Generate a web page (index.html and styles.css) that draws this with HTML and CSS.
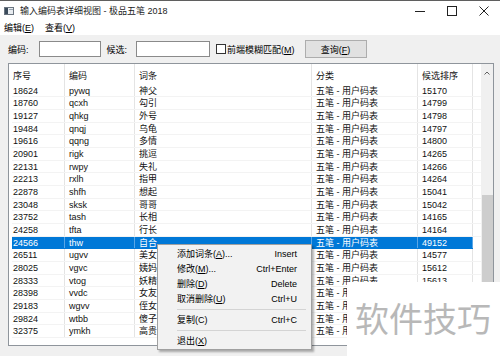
FILE: index.html
```html
<!DOCTYPE html>
<html lang="zh-CN">

<head>
    <meta charset="UTF-8" />
    <title>输入编码表详细视图 - 极品五笔 2018</title>
    <link rel="stylesheet" href="styles.css">
</head>

<body>
    <div class="window">
        <div class="titlebar">
            <svg class="appicon" width="10" height="8" viewBox="0 0 10 8">
                <rect x="0.5" y="0.5" width="9" height="7" fill="#e8ecf0" stroke="#6b7580" />
                <rect x="1" y="1" width="3" height="6" fill="#3a4a5a" />
                <rect x="5" y="2" width="4" height="1" fill="#9aa6b2" />
            </svg>
            <span class="title">输入编码表详细视图 - 极品五笔 2018</span>
            <div class="controls">
                <div class="ctl">
                    <svg width="10" height="10" viewBox="0 0 10 10"><path d="M0 5.5h10" stroke="#222" stroke-width="1" /></svg>
                </div>
                <div class="ctl">
                    <svg width="10" height="10" viewBox="0 0 10 10"><rect x="0.5" y="0.5" width="9" height="9" fill="none" stroke="#222" /></svg>
                </div>
                <div class="ctl">
                    <svg width="10" height="10" viewBox="0 0 10 10"><path d="M0.5 0.5l9 9M9.5 0.5l-9 9" stroke="#222" stroke-width="1" /></svg>
                </div>
            </div>
        </div>

        <div class="menubar">
            <span>编辑(<u>E</u>)</span>
            <span>查看(<u>V</u>)</span>
        </div>

        <div class="toolbar">
            <span class="lbl">编码:</span>
            <input class="field field-code" type="text">
            <span class="lbl lbl-cand">候选:</span>
            <input class="field field-cand" type="text">
            <span class="check"></span>
            <span class="lbl lbl-check">前端模糊匹配(<u>M</u>)</span>
            <button class="query">查询(<u>F</u>)</button>
        </div>

        <div class="list">
            <div class="grid">
                <div class="row head">
                    <div class="c c1">序号</div><div class="c c2">编码</div><div class="c c3">词条</div><div class="c c4">分类</div><div class="c c5">候选排序</div>
                </div>
                <div class="row"><div class="c c1">18624</div><div class="c c2">pywq</div><div class="c c3">神父</div><div class="c c4">五笔 - 用户码表</div><div class="c c5">15170</div></div>
                <div class="row"><div class="c c1">18760</div><div class="c c2">qcxh</div><div class="c c3">勾引</div><div class="c c4">五笔 - 用户码表</div><div class="c c5">14799</div></div>
                <div class="row"><div class="c c1">19127</div><div class="c c2">qhkg</div><div class="c c3">外号</div><div class="c c4">五笔 - 用户码表</div><div class="c c5">14798</div></div>
                <div class="row"><div class="c c1">19484</div><div class="c c2">qnqj</div><div class="c c3">乌龟</div><div class="c c4">五笔 - 用户码表</div><div class="c c5">14797</div></div>
                <div class="row"><div class="c c1">19616</div><div class="c c2">qqng</div><div class="c c3">多情</div><div class="c c4">五笔 - 用户码表</div><div class="c c5">14800</div></div>
                <div class="row"><div class="c c1">20901</div><div class="c c2">rigk</div><div class="c c3">挑逗</div><div class="c c4">五笔 - 用户码表</div><div class="c c5">14265</div></div>
                <div class="row"><div class="c c1">22131</div><div class="c c2">rwpy</div><div class="c c3">失礼</div><div class="c c4">五笔 - 用户码表</div><div class="c c5">14266</div></div>
                <div class="row"><div class="c c1">22213</div><div class="c c2">rxlh</div><div class="c c3">指甲</div><div class="c c4">五笔 - 用户码表</div><div class="c c5">14264</div></div>
                <div class="row"><div class="c c1">22878</div><div class="c c2">shfh</div><div class="c c3">想起</div><div class="c c4">五笔 - 用户码表</div><div class="c c5">15041</div></div>
                <div class="row"><div class="c c1">23048</div><div class="c c2">sksk</div><div class="c c3">哥哥</div><div class="c c4">五笔 - 用户码表</div><div class="c c5">15042</div></div>
                <div class="row"><div class="c c1">23752</div><div class="c c2">tash</div><div class="c c3">长相</div><div class="c c4">五笔 - 用户码表</div><div class="c c5">14165</div></div>
                <div class="row"><div class="c c1">24258</div><div class="c c2">tfta</div><div class="c c3">行长</div><div class="c c4">五笔 - 用户码表</div><div class="c c5">14164</div></div>
                <div class="row selected"><div class="c c1">24566</div><div class="c c2">thw</div><div class="c c3">自合</div><div class="c c4">五笔 - 用户码表</div><div class="c c5">49152</div></div>
                <div class="row"><div class="c c1">26511</div><div class="c c2">ugvv</div><div class="c c3">美女</div><div class="c c4">五笔 - 用户码表</div><div class="c c5">14577</div></div>
                <div class="row"><div class="c c1">28025</div><div class="c c2">vgvc</div><div class="c c3">姨妈</div><div class="c c4">五笔 - 用户码表</div><div class="c c5">15612</div></div>
                <div class="row"><div class="c c1">28333</div><div class="c c2">vtog</div><div class="c c3">妖精</div><div class="c c4">五笔 - 用户码表</div><div class="c c5">15613</div></div>
                <div class="row"><div class="c c1">28398</div><div class="c c2">vvdc</div><div class="c c3">女友</div><div class="c c4">五笔 - 用户码表</div><div class="c c5"></div></div>
                <div class="row"><div class="c c1">29183</div><div class="c c2">wgvv</div><div class="c c3">侄女</div><div class="c c4">五笔 - 用户码表</div><div class="c c5"></div></div>
                <div class="row"><div class="c c1">29824</div><div class="c c2">wtbb</div><div class="c c3">傻子</div><div class="c c4">五笔 - 用户码表</div><div class="c c5"></div></div>
                <div class="row"><div class="c c1">32375</div><div class="c c2">ymkh</div><div class="c c3">高贵</div><div class="c c4">五笔 - 用户码表</div><div class="c c5"></div></div>
            </div>
            <div class="scrollbar">
                <svg class="up" width="6" height="4" viewBox="0 0 6 4"><path d="M0.5 3.5L3 1l2.5 2.5" fill="none" stroke="#606060" stroke-width="1" /></svg>
                <div class="thumb"></div>
            </div>
        </div>

        <div class="ctxmenu">
            <div class="item"><span>添加词条(<u>A</u>)...</span><span>Insert</span></div>
            <div class="item"><span>修改(<u>M</u>)...</span><span>Ctrl+Enter</span></div>
            <div class="item"><span>删除(<u>D</u>)</span><span>Delete</span></div>
            <div class="item"><span>取消删除(<u>U</u>)</span><span>Ctrl+U</span></div>
            <div class="sep"></div>
            <div class="item"><span>复制(C)</span><span>Ctrl+C</span></div>
            <div class="sep"></div>
            <div class="item"><span>退出(<u>X</u>)</span><span></span></div>
        </div>

        <div class="watermark">软件技巧</div>
    </div>
</body>

</html>
```

FILE: styles.css
```css
body {
    margin: 0;
    background-color: #f0f0f0;
    font-family: "Liberation Sans", "Noto Sans CJK SC", sans-serif;
    font-size: 9px;
    color: #111;
    overflow: hidden;
}

.window {
    position: relative;
    height: 356px;
    box-sizing: border-box;
    border-top: 1px solid #5f5f5f;
}

/* title bar */
.titlebar {
    height: 19px;
    background-color: #fff;
    display: flex;
    align-items: center;
    padding-left: 4px;
}

.appicon {
    display: block;
}

.title {
    margin-left: 6px;
    color: #222;
}

.controls {
    margin-left: auto;
    display: flex;
    height: 19px;
}

.ctl {
    width: 32px;
    display: flex;
    align-items: center;
    justify-content: center;
}

/* menu bar */
.menubar {
    height: 15px;
    background-color: #fff;
    display: flex;
    align-items: center;
    gap: 11px;
    padding-left: 4px;
    color: #000;
}

u {
    text-underline-offset: 1px;
}

/* search row */
.toolbar {
    height: 28px;
    display: flex;
    align-items: center;
    padding-left: 8px;
    color: #000;
}

.field {
    box-sizing: border-box;
    height: 16px;
    margin: 0;
    padding: 0;
    border: 1px solid #8a8a8a;
    background-color: #fff;
}

.field-code {
    width: 62px;
    margin-left: 10px;
}

.lbl-cand {
    margin-left: 6px;
}

.field-cand {
    width: 74px;
    margin-left: 9px;
}

.check {
    box-sizing: border-box;
    width: 10px;
    height: 10px;
    margin-left: 6px;
    border: 1px solid #333;
    background-color: #fff;
}

.lbl-check {
    margin-left: 1px;
}

.query {
    box-sizing: border-box;
    width: 62px;
    height: 18px;
    margin-left: 10px;
    padding: 0;
    font: inherit;
    color: #000;
    background-color: #e1e1e1;
    border: 1px solid #adadad;
}

/* list view */
.list {
    box-sizing: border-box;
    height: 283px;
    margin: 0 6px 0 8px;
    border: 1px solid #8f959c;
    background-color: #fff;
    display: flex;
}

.grid {
    flex: 1;
    padding-left: 3px;
}

.row {
    display: flex;
    box-sizing: border-box;
    height: 12.68px;
    line-height: 12px;
    border-bottom: 1px solid #f3f3f3;
    white-space: nowrap;
}

.row.head {
    height: 20.6px;
    padding-top: 6px;
    border-bottom: none;
}

.c {
    box-sizing: border-box;
    border-right: 1px solid #e4e4e4;
    padding-left: 4px;
    overflow: hidden;
}

.c1 {
    width: 53px;
    padding-left: 1px;
}

.c2 {
    width: 70px;
}

.c3 {
    width: 177px;
}

.c4 {
    width: 106px;
}

.c5 {
    width: 55px;
}

.row.head .c {
    margin-top: -6px;
    padding-top: 6px;
}

.row.selected {
    background-color: #0078d7;
    color: #fff;
    width: 461px;
    border-bottom-color: #0078d7;
}

.row.selected .c {
    border-right-color: #5aa6e6;
}

.scrollbar {
    width: 12px;
    background-color: #f0f0f0;
    display: flex;
    flex-direction: column;
    align-items: center;
}

.up {
    display: block;
    margin-top: 7px;
}

.thumb {
    width: 11px;
    height: 105px;
    margin-top: 120px;
    background-color: #cdcdcd;
}

/* context menu */
.ctxmenu {
    position: absolute;
    left: 157px;
    top: 243px;
    width: 155px;
    box-sizing: border-box;
    padding: 1px 0;
    background-color: #f2f2f2;
    border: 1px solid #a0a0a0;
    box-shadow: 2px 2px 2px rgba(0, 0, 0, 0.3);
    color: #000;
}

.item {
    height: 15px;
    display: flex;
    align-items: center;
    justify-content: space-between;
    padding: 0 14px 0 19px;
}

.sep {
    height: 1px;
    margin: 2.5px 5px 2.5px 19px;
    background-color: #d4d4d4;
}

/* watermark */
.watermark {
    position: absolute;
    left: 347px;
    top: 281px;
    right: 0;
    bottom: 0;
    background-color: #fff;
    padding: 19px 0 0 8px;
    font-family: "Noto Sans CJK SC", sans-serif;
    font-size: 34px;
    line-height: 34px;
    color: #b8b8b8;
}
```
